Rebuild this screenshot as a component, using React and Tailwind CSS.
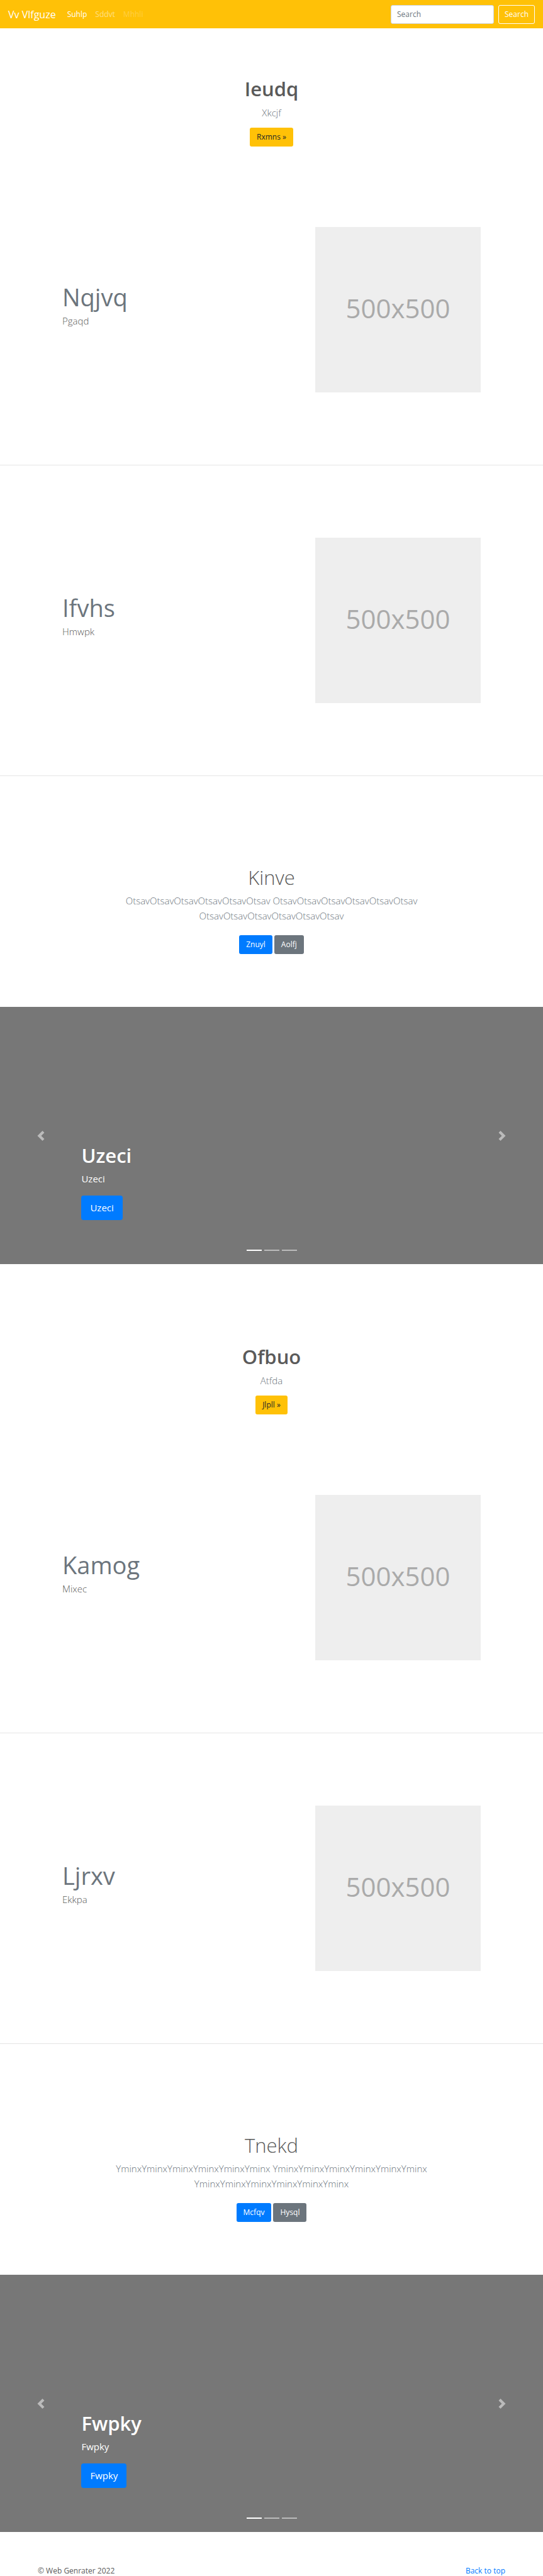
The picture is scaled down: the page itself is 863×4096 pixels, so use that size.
const btn = "inline-flex h-[30px] items-center justify-center rounded-[3px] px-[11px] text-xs leading-[18px]";

function Navbar() {
  return (
    <nav className="flex h-[45px] items-center bg-[#ffc107] px-[13px] text-white">
      <a href="#" className="mr-[18px] text-base leading-6">Vv Vlfguze</a>
      <ul className="flex flex-1 gap-[13px] text-xs">
        <li><a href="#">Suhlp</a></li>
        <li><a href="#" className="text-white/50">Sddvt</a></li>
        <li><a href="#" className="text-white/25">Mhhli</a></li>
      </ul>
      <form className="flex gap-[7px]" onSubmit={(e) => e.preventDefault()}>
        <input
          type="text"
          placeholder="Search"
          aria-label="Search"
          className="h-[30px] w-[164px] rounded-[3px] border border-[#ced4da] bg-white px-[9px] text-xs text-[#495057] placeholder:text-[#6c757d]"
        />
        <button type="submit" className="h-[30px] rounded-[3px] border border-white px-[9px] text-xs">Search</button>
      </form>
    </nav>
  );
}

function Hero({ title, text, action, first }) {
  return (
    <section className={`flex flex-col items-center text-center ${first ? "pt-[76px]" : "pt-[127px]"}`}>
      <h1 className="text-[31px] font-semibold leading-[40px] text-[#5a5a5a]">{title}</h1>
      <p className="mt-1.5 text-[15px] font-light leading-6 text-[#6c757d]">{text}</p>
      <a href="#" className={`${btn} mt-3 bg-[#ffc107] text-[#212529]`}>{action} »</a>
    </section>
  );
}

function Feature({ title, text }) {
  return (
    <section className="flex items-center justify-between border-b border-[#e5e5e5] px-[99px] py-[115px]">
      <div className="pb-4">
        <h2 className="text-[38px] leading-[48px] text-[#6c757d]">{title}</h2>
        <p className="mt-0.5 text-[15px] font-light leading-6 text-[#5a5a5a]">{text}</p>
      </div>
      <div className="flex size-[263px] items-center justify-center bg-[#eee] pb-1.5 text-[42px] text-[#aaa]">500x500</div>
    </section>
  );
}

function CallToAction({ title, word, primary, secondary }) {
  const run = word.repeat(6);
  return (
    <section className="flex flex-col items-center pb-[84px] pt-[142px] text-center">
      <h2 className="text-[31px] font-light leading-[38px] text-[#5a5a5a]">{title}</h2>
      <p className="mt-1.5 max-w-[510px] text-[15px] font-light leading-6 text-[#6c757d]">{run} {run} {run}</p>
      <div className="mt-[19px] flex gap-[3px]">
        <a href="#" className={`${btn} bg-[#007bff] text-white`}>{primary}</a>
        <a href="#" className={`${btn} bg-[#6c757d] text-white`}>{secondary}</a>
      </div>
    </section>
  );
}

function Chevron({ next }) {
  return (
    <svg viewBox="0 0 8 8" className="size-4" fill="#fff" aria-hidden="true">
      {next ? (
        <path d="M2.75 0l-1.5 1.5 2.5 2.5-2.5 2.5 1.5 1.5 4-4-4-4z" />
      ) : (
        <path d="M5.25 0l-4 4 4 4 1.5-1.5-2.5-2.5 2.5-2.5-1.5-1.5z" />
      )}
    </svg>
  );
}

function Carousel({ label }) {
  return (
    <section className="relative h-[409px] bg-[#777] text-white">
      <div className="flex h-full flex-col items-start justify-end px-[15%] pb-[70px]">
        <h2 className="text-[31px] font-semibold leading-[38px]">{label}</h2>
        <p className="mt-1.5 text-[15px] leading-6">{label}</p>
        <a href="#" className="mt-[15px] flex h-[39px] items-center rounded-[4px] bg-[#007bff] px-[14px] text-[15px]">{label}</a>
      </div>
      <button type="button" aria-label="Previous" className="absolute inset-y-0 left-0 flex w-[15%] items-center justify-center opacity-50">
        <Chevron />
      </button>
      <button type="button" aria-label="Next" className="absolute inset-y-0 right-0 flex w-[15%] items-center justify-center opacity-50">
        <Chevron next />
      </button>
      <div className="absolute inset-x-0 bottom-[21px] flex justify-center gap-1">
        <span className="h-[2px] w-6 bg-white" />
        <span className="h-[2px] w-6 bg-white/50" />
        <span className="h-[2px] w-6 bg-white/50" />
      </div>
    </section>
  );
}

export default function App() {
  return (
    <div className="bg-white font-['Open_Sans','Noto_Sans',sans-serif]">
      <Navbar />
      <main>
        <Hero first title="Ieudq" text="Xkcjf" action="Rxmns" />
        <div className="pt-[13px]">
          <Feature title="Nqjvq" text="Pgaqd" />
          <Feature title="Ifvhs" text="Hmwpk" />
        </div>
        <CallToAction title="Kinve" word="Otsav" primary="Znuyl" secondary="Aolfj" />
        <Carousel label="Uzeci" />
        <Hero title="Ofbuo" text="Atfda" action="Jlpll" />
        <div className="pt-[13px]">
          <Feature title="Kamog" text="Mixec" />
          <Feature title="Ljrxv" text="Ekkpa" />
        </div>
        <CallToAction title="Tnekd" word="Yminx" primary="Mcfqv" secondary="Hysql" />
        <Carousel label="Fwpky" />
      </main>
      <footer className="flex justify-between px-[60px] pt-[53px] text-xs leading-[18px] text-[#5a5a5a]">
        <p>© Web Genrater 2022</p>
        <a href="#" className="text-[#007bff]">Back to top</a>
      </footer>
    </div>
  );
}
